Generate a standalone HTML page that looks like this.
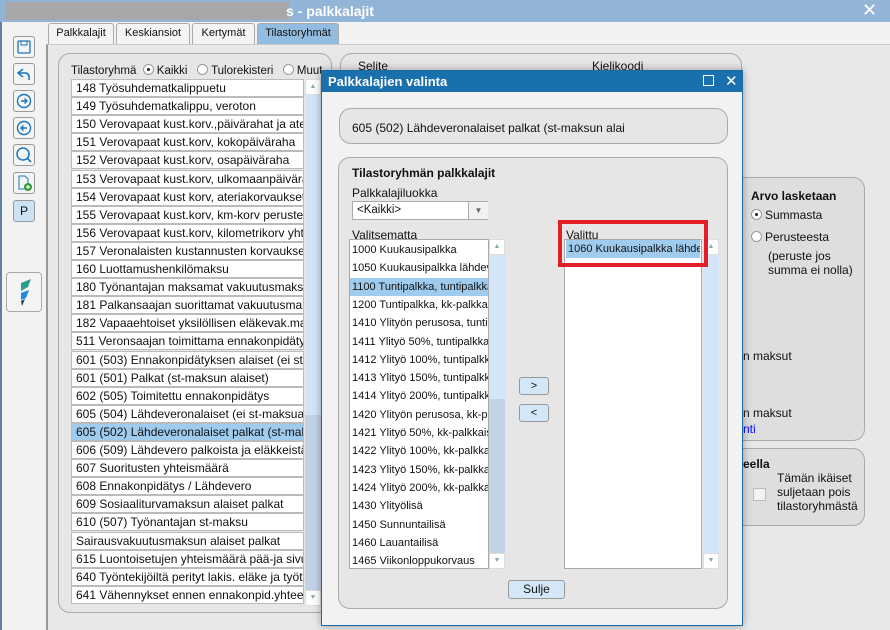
<!DOCTYPE html>
<html><head><meta charset="utf-8"><style>
*{box-sizing:border-box;margin:0;padding:0}
body{width:890px;height:630px;overflow:hidden;background:#f2f2f2;font-family:"Liberation Sans",Arial,sans-serif;font-size:12px;color:#111;position:relative}
.a{position:absolute}
.title{left:0;top:0;width:890px;height:22px;background:#92b4d6;color:#fff;font-weight:bold;font-size:14px}
.tab{top:23px;height:21px;border:1px solid #aaa;border-bottom:none;background:#f4f4f4;border-radius:3px 3px 0 0;text-align:center;line-height:19px;font-size:11px}
.btn{left:13px;width:22px;height:22px;border:1px solid #999;border-radius:3px;background:#f4f4f4}
.row{left:71px;width:233px;height:18px;background:#fff;border:1px solid #bbb;padding-left:4px;line-height:16px;white-space:nowrap;overflow:hidden;font-size:12px}
.box{border:1px solid #aaa;border-radius:12px;background:#e6e6e6}
.li{left:0;width:138px;height:18.3px;line-height:18px;padding-left:2px;white-space:nowrap;overflow:hidden;font-size:11px}
.rad{display:inline-block;width:11px;height:11px;border:1px solid #999;border-radius:50%;background:#fff;vertical-align:-1px;margin-right:3px;position:relative}
.rad.on:after{content:"";position:absolute;left:3px;top:3px;width:3px;height:3px;border-radius:50%;background:#222}
.sb{width:16px;background:#d2e6f7}
.arr{position:absolute;left:0;width:16px;height:16px;background:#fff;border:1px solid #ddd}
.ub{font-size:7px;color:#8aa;text-align:center;line-height:14px}
.pb{border:1px solid #999;border-radius:3px;background:#d3e7f8;text-align:center;font-size:11px}
</style></head><body>
<div class="a title"><div class="a" style="left:6px;top:2px;width:283px;height:18px;background:#a8a8a8"></div><span class="a" style="left:286px;top:3px">s - palkkalajit</span><span class="a" style="left:862px;top:0;font-size:18px;font-weight:normal">✕</span></div>
<div class="a" style="left:0;top:22px;width:2px;height:608px;background:#5f7fa6"></div>
<div class="a tab" style="left:48px;width:66px">Palkkalajit</div>
<div class="a tab" style="left:116px;width:74px">Keskiansiot</div>
<div class="a tab" style="left:192px;width:63px">Kertymät</div>
<div class="a tab" style="left:257px;width:82px;background:#93bde0">Tilastoryhmät</div>
<div class="a" style="left:46px;top:44px;width:844px;height:586px;background:#e8e8e8;border-left:2px solid #999;border-top:1px solid #ccc"></div>
<div class="a btn" style="top:36px"><svg width="20" height="20"><rect x="4" y="4" width="12" height="12" rx="1" fill="none" stroke="#1b75bc" stroke-width="1.3"/><rect x="7" y="4" width="6" height="4" fill="none" stroke="#1b75bc"/></svg></div>
<div class="a btn" style="top:63px"><svg width="20" height="20"><path d="M9 5 L4 9 L9 13 M4 9 H12 Q16 10 15 16" fill="none" stroke="#1b75bc" stroke-width="1.5"/></svg></div>
<div class="a btn" style="top:90px"><svg width="20" height="20"><circle cx="10" cy="10" r="6.5" fill="none" stroke="#1b75bc" stroke-width="1.4"/><path d="M7 10H13M10.5 7.5L13 10L10.5 12.5" fill="none" stroke="#1b75bc" stroke-width="1.4"/></svg></div>
<div class="a btn" style="top:117px"><svg width="20" height="20"><circle cx="10" cy="10" r="6.5" fill="none" stroke="#1b75bc" stroke-width="1.4"/><path d="M7 10H13M9.5 7.5L7 10L9.5 12.5" fill="none" stroke="#1b75bc" stroke-width="1.4"/></svg></div>
<div class="a btn" style="top:144px"><svg width="20" height="20"><circle cx="9" cy="9" r="6" fill="none" stroke="#1b75bc" stroke-width="1.5"/><path d="M13 13L17 17" stroke="#1b75bc" stroke-width="1.6"/></svg></div>
<div class="a btn" style="top:172px"><svg width="20" height="20"><path d="M5 3H11L14 6V16H5Z" fill="none" stroke="#1b75bc"/><circle cx="14" cy="14" r="4" fill="#3a9a3a"/><path d="M12 14H16M14 12V16" stroke="#fff" stroke-width="1.2"/></svg></div>
<div class="a btn" style="top:200px;background:#cde2f2;text-align:center;line-height:20px;font-size:12px">P</div>
<div class="a" style="left:6px;top:272px;width:36px;height:40px;border:1px solid #aaa;border-radius:4px;background:#f4f4f4"><svg width="36" height="40"><path d="M14 10 L24 6 L21 14 L14 18Z" fill="#2a9d8f"/><path d="M14 20 L22 17 L19 25 L14 27Z" fill="#1e88e5"/><path d="M14 28 L18 26 L15 33Z" fill="#1c3d5a"/></svg></div>
<div class="a box" style="left:58px;top:53px;width:274px;height:560px"></div>
<div class="a" style="left:71px;top:64px;font-size:11.5px;white-space:nowrap">Tilastoryhmä &nbsp;<span class="rad on"></span>Kaikki &nbsp;&nbsp;<span class="rad"></span>Tulorekisteri &nbsp;&nbsp;<span class="rad"></span>Muut</div>
<div class="a sb" style="left:305px;top:79px;height:527px;background:#c3d2e7"><div class="a sb" style="left:0;top:0;height:336px"></div><div class="arr ub" style="top:0">▲</div><div class="arr ub" style="top:511px">▼</div></div>
<div id="L"></div>
<div class="a box" style="left:340px;top:53px;width:402px;height:300px;background:#e6e6e6"></div>
<div class="a" style="left:358px;top:59px">Selite</div>
<div class="a" style="left:592px;top:59px">Kielikoodi</div>
<div class="a box" style="left:700px;top:177px;width:165px;height:264px;background:#dedede"></div>
<div class="a" style="left:751px;top:189px;font-weight:bold">Arvo lasketaan</div>
<div class="a" style="left:751px;top:208px"><span class="rad on"></span>Summasta</div>
<div class="a" style="left:751px;top:230px"><span class="rad"></span>Perusteesta</div>
<div class="a" style="left:768px;top:249px;line-height:14px">(peruste jos<br>summa ei nolla)</div>
<div class="a" style="left:743px;top:349px">n maksut</div>
<div class="a" style="left:743px;top:406px">n maksut</div>
<div class="a" style="left:743px;top:422px;color:#00f">nti</div>
<div class="a box" style="left:700px;top:448px;width:165px;height:78px;background:#dedede"></div>
<div class="a" style="left:743px;top:457px;font-weight:bold">eella</div>
<div class="a" style="left:753px;top:488px;width:13px;height:13px;border:1px solid #bbb;background:#f2f2f2"></div>
<div class="a" style="left:777px;top:471px;line-height:14px">Tämän ikäiset<br>suljetaan pois<br>tilastoryhmästä</div>
<div class="a" style="left:321px;top:70px;width:422px;height:556px;background:#f2f2f2;border:1px solid #1a6aa8;box-shadow:0 0 8px rgba(0,0,0,.35)">
 <div class="a" style="left:0;top:0;width:420px;height:21px;background:#1a6fad;color:#fff;font-weight:bold;font-size:13px;line-height:21px;padding-left:6px">Palkkalajien valinta<span class="a" style="left:381px;top:4px;width:11px;height:11px;border:1.5px solid #fff"></span><span class="a" style="left:403px;top:0;font-size:15px;font-weight:normal">✕</span></div>
 <div class="a box" style="left:17px;top:37px;width:389px;height:36px;background:#e6e6e6"></div>
 <div class="a" style="left:30px;top:50px">605 (502) Lähdeveronalaiset palkat (st-maksun alai</div>
 <div class="a box" style="left:16px;top:86px;width:390px;height:452px;background:#e6e6e6"></div>
 <div class="a" style="left:30px;top:95px;font-weight:bold">Tilastoryhmän palkkalajit</div>
 <div class="a" style="left:30px;top:115px">Palkkalajiluokka</div>
 <div class="a" style="left:30px;top:130px;width:136px;height:19px;background:#fff;border:1px solid #aaa;padding-left:4px;line-height:17px;font-size:11.5px">&lt;Kaikki&gt;<span class="a" style="left:115px;top:0;width:20px;height:17px;border-left:1px solid #aaa;background:#f2f2f2;font-size:8px;color:#666;text-align:center">▼</span></div>
 <div class="a" style="left:30px;top:157px">Valitsematta</div>
 <div class="a" style="left:27px;top:168px;width:140px;height:330px;background:#fff;border:1px solid #aaa;overflow:hidden" id="D"></div>
 <div class="a sb" style="left:167px;top:168px;height:330px;background:#c3d2e7"><div class="a sb" style="left:0;top:0;height:160px"></div><div class="arr ub" style="top:0">▲</div><div class="arr ub" style="top:314px">▼</div></div>
 <div class="a pb" style="left:197px;top:306px;width:30px;height:18px;line-height:16px">&gt;</div>
 <div class="a pb" style="left:197px;top:333px;width:30px;height:18px;line-height:16px">&lt;</div>
 <div class="a" style="left:244px;top:157px">Valittu</div>
 <div class="a" style="left:242px;top:168px;width:138px;height:330px;background:#fff;border:1px solid #aaa;overflow:hidden"><div class="a li" style="top:0;left:1px;width:134px;background:#9fcbee">1060 Kuukausipalkka lähdeverollinen</div></div>
 <div class="a sb" style="left:381px;top:168px;height:330px"><div class="arr ub" style="top:0">▲</div><div class="arr ub" style="top:314px">▼</div></div>
 <div class="a" style="left:236px;top:149px;width:150px;height:47px;border:4px solid #e21f26"></div>
 <div class="a pb" style="left:186px;top:509px;width:57px;height:19px;line-height:17px;font-size:12px">Sulje</div>
</div>
<script>
var L=["148 Työsuhdematkalippuetu","149 Työsuhdematkalippu, veroton","150 Verovapaat kust.korv.,päivärahat ja ateriakorvaukset","151 Verovapaat kust.korv, kokopäiväraha","152 Verovapaat kust.korv, osapäiväraha","153 Verovapaat kust.korv, ulkomaanpäiväraha","154 Verovapaat kust korv, ateriakorvaukset","155 Verovapaat kust.korv, km-korv perusteen kr","156 Verovapaat kust.korv, kilometrikorv yht.","157 Veronalaisten kustannusten korvaukset","160 Luottamushenkilömaksu","180 Työnantajan maksamat vakuutusmaksut","181 Palkansaajan suorittamat vakuutusmaksut","182 Vapaaehtoiset yksilöllisen eläkevak.maksut","511 Veronsaajan toimittama ennakonpidätys yht","601 (503) Ennakonpidätyksen alaiset (ei st-maksua)","601 (501) Palkat (st-maksun alaiset)","602 (505) Toimitettu ennakonpidätys","605 (504) Lähdeveronalaiset (ei st-maksua)","605 (502) Lähdeveronalaiset palkat (st-maksun alaiset)","606 (509) Lähdevero palkoista ja eläkkeistä","607 Suoritusten yhteismäärä","608 Ennakonpidätys / Lähdevero","609 Sosiaaliturvamaksun alaiset palkat","610 (507) Työnantajan st-maksu","Sairausvakuutusmaksun alaiset palkat","615 Luontoisetujen yhteismäärä pää-ja sivutoim","640 Työntekijöiltä perityt lakis. eläke ja tyött.","641 Vähennykset ennen ennakonpid.yhteensä"];
var h="";L.forEach(function(t,i){h+='<div class="a row" style="top:'+(79+i*18.1)+'px;'+(i==19?'background:#9fcbee;':'')+'">'+t+'</div>'});document.getElementById("L").outerHTML=h;
var D=["1000 Kuukausipalkka","1050 Kuukausipalkka lähdeverollinen","1100 Tuntipalkka, tuntipalkkaiset","1200 Tuntipalkka, kk-palkkaiset","1410 Ylityön perusosa, tuntipalkkaiset","1411 Ylityö 50%, tuntipalkkaiset","1412 Ylityö 100%, tuntipalkkaiset","1413 Ylityö 150%, tuntipalkkaiset","1414 Ylityö 200%, tuntipalkkaiset","1420 Ylityön perusosa, kk-palkkaiset","1421 Ylityö 50%, kk-palkkaiset","1422 Ylityö 100%, kk-palkkaiset","1423 Ylityö 150%, kk-palkkaiset","1424 Ylityö 200%, kk-palkkaiset","1430 Ylityölisä","1450 Sunnuntailisä","1460 Lauantailisä","1465 Viikonloppukorvaus"];
h="";D.forEach(function(t,i){h+='<div class="a li" style="top:'+(1+i*18.3)+'px;'+(i==2?'background:#9fcbee;':'')+'">'+t+'</div>'});document.getElementById("D").innerHTML=h;
</script>
</body></html>
